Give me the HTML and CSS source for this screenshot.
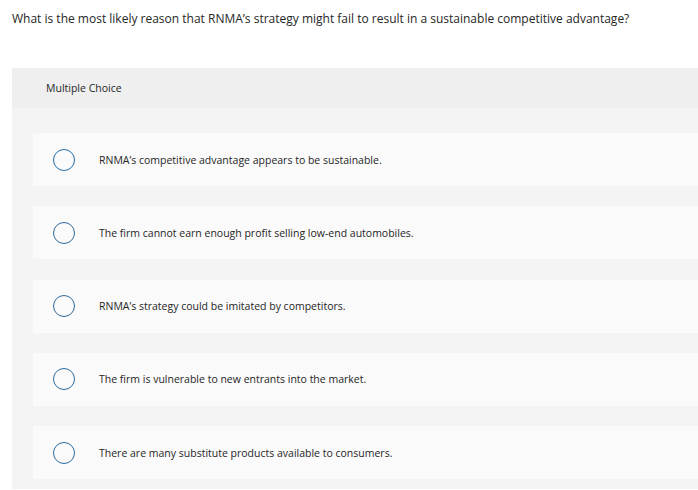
FILE: index.html
```html
<!DOCTYPE html>
<html>
<head>
<meta charset="utf-8">
<link rel="stylesheet" href="styles.css">
</head>
<body>
<p class="question">What is the most likely reason that RNMA’s strategy might fail to result in a sustainable competitive advantage?</p>
<div class="panel">
  <div class="panel-head">Multiple Choice</div>
  <div class="options">
    <label class="option"><span class="radio"></span><span class="text">RNMA’s competitive advantage appears to be sustainable.</span></label>
    <label class="option"><span class="radio"></span><span class="text">The firm cannot earn enough profit selling low-end automobiles.</span></label>
    <label class="option"><span class="radio"></span><span class="text">RNMA’s strategy could be imitated by competitors.</span></label>
    <label class="option"><span class="radio"></span><span class="text">The firm is vulnerable to new entrants into the market.</span></label>
    <label class="option"><span class="radio"></span><span class="text">There are many substitute products available to consumers.</span></label>
  </div>
</div>
</body>
</html>
```
FILE: styles.css
```css
html, body {
  margin: 0;
  padding: 0;
  background: #ffffff;
  overflow: hidden;
}
body {
  font-family: "Open Sans", "Liberation Sans", sans-serif;
  color: #333333;
  width: 698px;
  height: 490px;
}
.question {
  margin: 0;
  padding: 10px 0 0 12px;
  height: 68px;
  box-sizing: border-box;
  font-size: 12px;
  line-height: 17px;
  color: #262626;
  white-space: nowrap;
}
.panel {
  margin-left: 12px;
  width: 700px;
  background: #f4f4f4;
  padding-bottom: 10px;
}
.panel-head {
  height: 40px;
  background: #efefef;
  display: flex;
  align-items: center;
  padding-left: 34px;
  font-size: 10.5px;
  color: #262626;
}
.options {
  display: flex;
  flex-direction: column;
  gap: 20.25px;
  padding: 25px 0 0 21px;
}
.option {
  height: 53px;
  background: #fafafa;
  display: flex;
  align-items: center;
  padding-left: 20px;
}
.radio {
  width: 20px;
  height: 20px;
  border: 1.5px solid #2a6aa0;
  border-radius: 50%;
  flex: none;
}
.text {
  margin-left: 24px;
  font-size: 10.5px;
  color: #262626;
}
```
